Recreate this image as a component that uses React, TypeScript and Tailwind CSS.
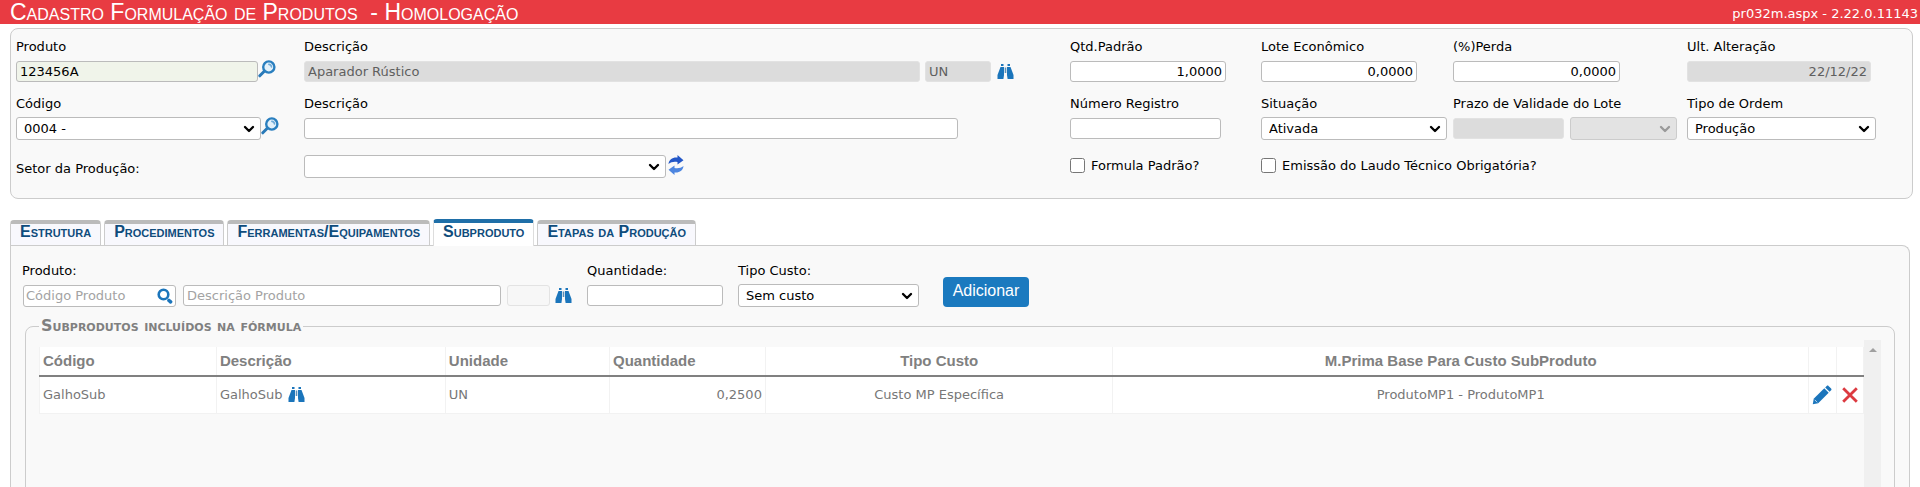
import React, { useState } from "react";
import { ChevronDown } from "lucide-react";
import clsx from "clsx";

const inputBase =
  "h-[21px] max-w-full rounded-[3px] border border-[#bbb] px-[3px] text-[13px] leading-4";
const readOnlyBase =
  "h-[21px] max-w-full rounded-[3px] border border-[#e2e2e2] bg-[#dcdcdc] px-[3px] text-[13px] leading-4 text-[#5f5f5f]";

const SearchIcon: React.FC = () => (
  <svg viewBox="0 0 18 18" className="h-[18px] w-[18px]" fill="none">
    <path d="M6.8 10.8 1.8 15.8" stroke="#2a7ab8" strokeWidth="3" strokeLinecap="round" />
    <circle cx="10.8" cy="7" r="5.6" fill="#e3f1fa" stroke="#2a7fbf" strokeWidth="2.4" />
    <path d="M10.8 4.4a2.8 2.8 0 0 1 2.7 2.6" stroke="#6fabd8" strokeWidth="1.6" strokeLinecap="round" />
  </svg>
);

const LookupIcon: React.FC = () => (
  <svg viewBox="0 0 16 16" className="h-4 w-4" fill="none" stroke="#1b75bb">
    <circle cx="6.5" cy="6.5" r="4.8" strokeWidth="2.6" />
    <path d="m12 12.5 1.6 1.4" strokeWidth="3.6" strokeLinecap="round" />
  </svg>
);

const BinocularsIcon: React.FC = () => (
  <svg viewBox="0 0 17 16" className="h-4 w-[17px]" fill="#1b75bb">
    <path d="M4 0h2.5v2H4ZM10.5 0H13v2h-2.5Z" />
    <path d="M3.500 3H7v8l-.6 4H.5V11Z" />
    <path d="M13.500 3H10v8l.6 4h5.900V11Z" />
    <path d="M7.7 3.5h1.600V9H7.700Z" fill="#5b8fb8" />
  </svg>
);

const RefreshIcon: React.FC = () => (
  <svg viewBox="0 0 16 20" className="h-5 w-4">
    <path d="M.5 9C1 4.5 4.5 2 9.5 2.5V0l6 5.2-6 4.3V7C6 6.3 3 7 .5 9Z" fill="#2458c8" />
    <path d="M15.5 11c-.5 4.5-4 7-9 6.5V20L.5 14.8l6-4.3V13c3.5.7 6.5 0 9-2Z" fill="#4d86e0" />
  </svg>
);

const EditIcon: React.FC = () => (
  <svg viewBox="0 0 20 20" className="h-5 w-5" fill="#1b75bb">
    <path d="M.8 19.2l.9-5.4L12.3 3.300l4.400 4.400L6.200 18.300Z" />
    <path d="M13.200 2.400l1.500-1.500c.5-.5 1.300-.5 1.800 0l2.600 2.600c.5.5.5 1.300 0 1.800l-1.500 1.500Z" />
    <path d="M2.700 14.800l2.500 2.500" stroke="#b9d8ee" strokeWidth="1" />
  </svg>
);

const DeleteIcon: React.FC = () => (
  <svg viewBox="0 0 16 16" className="h-4 w-4" stroke="#dc3a40" strokeWidth="2.8">
    <path d="M1.2 1.2l13.6 13.6M14.8 1.2 1.2 14.8" />
  </svg>
);

interface IconButtonProps {
  label: string;
  className?: string;
  children: React.ReactNode;
}

const IconButton: React.FC<IconButtonProps> = ({ label, className, children }) => (
  <button type="button" aria-label={label} className={clsx("shrink-0 cursor-pointer", className)}>
    {children}
  </button>
);

const BinocularsButton: React.FC = () => (
  <IconButton label="Visualizar produto">
    <BinocularsIcon />
  </IconButton>
);

interface SelectProps {
  id: string;
  option?: string;
  label?: string;
  disabled?: boolean;
  className: string;
}

const Select: React.FC<SelectProps> = ({ id, option, label, disabled, className }) => (
  <div className={clsx("relative max-w-full", className)}>
    <select
      id={id}
      aria-label={label}
      disabled={disabled}
      className={clsx(
        "block h-[23px] w-full appearance-none rounded-[3px] border px-[7px] text-[13px] leading-4",
        disabled ? "border-[#ccc] bg-[#e3e3e3]" : "border-[#bbb] bg-white",
      )}
    >
      {option && <option>{option}</option>}
    </select>
    <ChevronDown
      strokeWidth={3.5}
      className={clsx(
        "pointer-events-none absolute top-1 right-1 h-4 w-4",
        disabled ? "text-[#999]" : "text-black",
      )}
    />
  </div>
);

interface FieldProps {
  id: string;
  label: string;
  children: React.ReactNode;
}

const Field: React.FC<FieldProps> = ({ id, label, children }) => (
  <div className="min-w-0">
    <label htmlFor={id} className="block h-[21px] leading-4 whitespace-nowrap">
      {label}
    </label>
    <div className="flex h-[23px] items-center">{children}</div>
  </div>
);

const TABS = [
  "Estrutura",
  "Procedimentos",
  "Ferramentas/Equipamentos",
  "Subproduto",
  "Etapas da Produção",
];

const SUBPRODUTOS = [
  {
    codigo: "GalhoSub",
    descricao: "GalhoSub",
    unidade: "UN",
    quantidade: "0,2500",
    tipoCusto: "Custo MP Específica",
    materiaPrima: "ProdutoMP1 - ProdutoMP1",
  },
];

const FormulaForm: React.FC = () => (
  <section className="mt-1 mr-[7px] ml-[10px] rounded-lg border border-[#ccc] bg-[#f9f9f9] pt-[10px] pb-5 pl-[5px]">
    <div className="grid grid-cols-[288fr_766fr_191fr_192fr_234fr_225fr] gap-y-[13px]">
      <Field id="produto" label="Produto">
        <input id="produto" defaultValue="123456A" className={clsx(inputBase, "w-[242px] bg-[#f0f4ea]")} />
        <IconButton label="Pesquisar produto" className="self-start">
          <SearchIcon />
        </IconButton>
      </Field>
      <Field id="descricao-produto" label="Descrição">
        <input id="descricao-produto" readOnly value="Aparador Rústico" className={clsx(readOnlyBase, "w-[616px]")} />
        <input aria-label="Unidade" readOnly value="UN" className={clsx(readOnlyBase, "mr-1.5 ml-[5px] w-[66px]")} />
        <BinocularsButton />
      </Field>
      <Field id="qtd" label="Qtd.Padrão">
        <input id="qtd" defaultValue="1,0000" className={clsx(inputBase, "w-[156px] bg-white text-right")} />
      </Field>
      <Field id="lote" label="Lote Econômico">
        <input id="lote" defaultValue="0,0000" className={clsx(inputBase, "w-[156px] bg-white text-right")} />
      </Field>
      <Field id="perda" label="(%)Perda">
        <input id="perda" defaultValue="0,0000" className={clsx(inputBase, "w-[167px] bg-white text-right")} />
      </Field>
      <Field id="alteracao" label="Ult. Alteração">
        <input id="alteracao" readOnly value="22/12/22" className={clsx(readOnlyBase, "w-[184px] text-right")} />
      </Field>

      <Field id="codigo" label="Código">
        <Select id="codigo" option="0004 -" className="w-[245px]" />
        <IconButton label="Pesquisar código" className="self-start">
          <SearchIcon />
        </IconButton>
      </Field>
      <Field id="descricao" label="Descrição">
        <input id="descricao" className={clsx(inputBase, "w-[654px] bg-white")} />
      </Field>
      <Field id="registro" label="Número Registro">
        <input id="registro" className={clsx(inputBase, "w-[151px] bg-white")} />
      </Field>
      <Field id="situacao" label="Situação">
        <Select id="situacao" option="Ativada" className="w-[186px]" />
      </Field>
      <Field id="prazo" label="Prazo de Validade do Lote">
        <input id="prazo" readOnly className={clsx(readOnlyBase, "mr-1.5 w-[111px]")} />
        <Select id="prazo-unidade" label="Unidade do prazo" disabled className="w-[107px]" />
      </Field>
      <Field id="ordem" label="Tipo de Ordem">
        <Select id="ordem" option="Produção" className="w-[189px]" />
      </Field>
    </div>

    <div className="mt-[15px] grid grid-cols-[288fr_766fr_191fr_651fr] items-center">
      <label htmlFor="setor" className="pt-1">
        Setor da Produção:
      </label>
      <div className="flex h-[23px] items-center gap-0.5">
        <Select id="setor" className="w-[362px]" />
        <IconButton label="Atualizar setores" className="self-start">
          <RefreshIcon />
        </IconButton>
      </div>
      <label className="flex items-center gap-1.5 pb-0.5 whitespace-nowrap">
        <input type="checkbox" className="h-[15px] w-[15px]" />
        Formula Padrão?
      </label>
      <label className="flex items-center gap-1.5 pb-0.5 whitespace-nowrap">
        <input type="checkbox" className="h-[15px] w-[15px]" />
        Emissão do Laudo Técnico Obrigatória?
      </label>
    </div>
  </section>
);

const SubprodutoForm: React.FC = () => (
  <div className="flex items-end pt-[17px] pl-[11px]">
    <Field id="sub-produto" label="Produto:">
      <div className="ml-px flex h-[22px] w-[153px] items-center rounded-[3px] border border-[#bbb] bg-white pr-0.5">
        <input
          id="sub-produto"
          placeholder="Código Produto"
          className="min-w-0 flex-1 pl-0.5 leading-4 placeholder:text-[#a3a3a3]"
        />
        <IconButton label="Pesquisar subproduto">
          <LookupIcon />
        </IconButton>
      </div>
      <input
        aria-label="Descrição Produto"
        placeholder="Descrição Produto"
        className={clsx(inputBase, "mr-1.5 ml-[7px] w-[318px] bg-white placeholder:text-[#a3a3a3]")}
      />
      <input
        aria-label="Unidade do subproduto"
        disabled
        className="mr-[5px] h-[21px] w-[43px] rounded-[3px] border border-[#e3e3e3] bg-[#f7f7f7]"
      />
      <BinocularsButton />
    </Field>
    <div className="ml-[15px]">
      <Field id="quantidade" label="Quantidade:">
        <input id="quantidade" className={clsx(inputBase, "w-[136px] bg-white")} />
      </Field>
    </div>
    <div className="ml-[15px]">
      <Field id="tipo-custo" label="Tipo Custo:">
        <Select id="tipo-custo" option="Sem custo" className="w-[181px]" />
      </Field>
    </div>
    <button
      type="button"
      className="ml-6 h-[30px] w-[86px] cursor-pointer rounded bg-[#1b7abf] pb-0.5 font-['Liberation_Sans',sans-serif] text-base text-white"
    >
      Adicionar
    </button>
  </div>
);

const SubprodutoTable: React.FC = () => (
  <table className="w-full table-fixed border-collapse bg-white text-[#777]">
    <colgroup>
      <col className="w-[9.7%]" />
      <col className="w-[12.55%]" />
      <col className="w-[9%]" />
      <col className="w-[8.55%]" />
      <col className="w-[19.05%]" />
      <col />
      <col className="w-7" />
      <col className="w-[27px]" />
    </colgroup>
    <thead>
      <tr className="h-[29px] border-b-2 border-[#808080] text-left font-['Liberation_Sans',sans-serif] text-[15px] text-[#808080] [&>th]:border-x [&>th]:border-x-[#f2f2f2] [&>th]:px-[3px]">
        <th>Código</th>
        <th>Descrição</th>
        <th>Unidade</th>
        <th>Quantidade</th>
        <th className="text-center">Tipo Custo</th>
        <th className="text-center">M.Prima Base Para Custo SubProduto</th>
        <th aria-label="Editar" />
        <th aria-label="Excluir" />
      </tr>
    </thead>
    <tbody>
      {SUBPRODUTOS.map((s) => (
        <tr key={s.codigo} className="h-[37px] [&>td]:border [&>td]:border-t-0 [&>td]:border-[#f2f2f2] [&>td]:px-[3px]">
          <td>{s.codigo}</td>
          <td>
            <div className="flex items-center gap-[5px]">
              {s.descricao}
              <BinocularsButton />
            </div>
          </td>
          <td>{s.unidade}</td>
          <td className="text-right">{s.quantidade}</td>
          <td className="text-center">{s.tipoCusto}</td>
          <td className="text-center">{s.materiaPrima}</td>
          <td>
            <div className="flex">
              <IconButton label="Editar">
                <EditIcon />
              </IconButton>
            </div>
          </td>
          <td>
            <div className="flex justify-center">
              <IconButton label="Excluir">
                <DeleteIcon />
              </IconButton>
            </div>
          </td>
        </tr>
      ))}
    </tbody>
  </table>
);

const App: React.FC = () => {
  const [activeTab, setActiveTab] = useState("Subproduto");

  return (
    <div className="flex h-screen flex-col overflow-hidden bg-white font-['DejaVu_Sans',sans-serif] text-[13px] leading-4 text-black">
      <header className="flex h-6 shrink-0 items-center justify-between bg-[#e83b42] pr-0.5 pl-[10px] text-white">
        <h1 className="font-['Liberation_Sans',sans-serif] text-[23px] leading-6 whitespace-pre [font-variant:small-caps]">
          Cadastro Formulação de Produtos  - Homologação
        </h1>
        <span className="pt-1">pr032m.aspx - 2.22.0.11143</span>
      </header>

      <FormulaForm />

      <nav role="tablist" className="mt-5 ml-[10px] flex h-[26px] shrink-0 items-end gap-[3px]">
        {TABS.map((tab) => (
          <button
            key={tab}
            type="button"
            role="tab"
            aria-selected={tab === activeTab}
            onClick={() => setActiveTab(tab)}
            className={clsx(
              "cursor-pointer rounded-t border-x border-t-4 px-[9px] font-['Liberation_Sans',sans-serif] text-base leading-4 font-bold text-[#0f4c7c] [font-variant:small-caps]",
              tab === activeTab
                ? "z-10 -mb-px h-[27px] border-x-[#ddd] border-t-[#1f6fa8] bg-white pb-1.5"
                : "h-[25px] border-x-[#ccc] border-t-[#bbb] bg-[#f8f8fd] pb-1.5",
            )}
          >
            {tab}
          </button>
        ))}
      </nav>

      <section className="mx-[10px] min-h-0 flex-1 overflow-hidden rounded-tr-lg border border-b-0 border-[#ccc] bg-[#f9f9f9]">
        <SubprodutoForm />
        <fieldset className="mx-[14px] mt-[11px] rounded-lg border border-[#ccc] pr-[13px] pl-[13px]">
          <legend className="px-0.5 text-base leading-4 font-bold text-[#808080] [font-variant:small-caps]">
            Subprodutos incluídos na fórmula
          </legend>
          <div className="flex h-60">
            <div className="mt-[13px] min-w-0 flex-1">
              <SubprodutoTable />
            </div>
            <div className="mt-1.5 flex w-[17px] justify-center bg-[#f0f0f0] pt-2">
              <svg viewBox="0 0 8 4" className="h-1 w-2" fill="#a0a0a0">
                <path d="M4 0l4 4H0Z" />
              </svg>
            </div>
          </div>
        </fieldset>
      </section>
    </div>
  );
};

export default App;
